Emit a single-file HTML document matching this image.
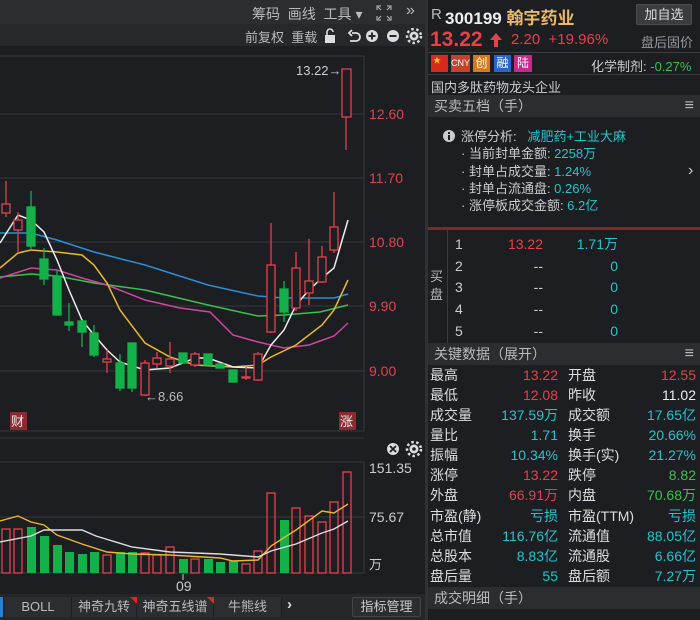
<!DOCTYPE html>
<html><head><meta charset="utf-8"><style>
*{margin:0;padding:0;box-sizing:border-box}
body{width:700px;height:620px;background:#1d1e22;font-family:"Liberation Sans","Noto Sans CJK SC",sans-serif;overflow:hidden;position:relative;color:#ddd}
.a{position:absolute;white-space:nowrap}
.r{color:#e8404a}.c{color:#27c3cc}.g{color:#3ac150}.w{color:#eee}.gr{color:#999}
.hd{position:absolute;left:428px;width:272px;height:22px;background:#2b2d31;font-size:14px;color:#bbb;padding-left:6px;line-height:22px}
.hd b{position:absolute;right:6px;top:0;font-weight:normal;font-size:16px}
.row{position:absolute;left:430px;width:268px;height:20px;font-size:14px;line-height:20px}
.row span{position:absolute}
.l1{left:0}.v1{right:140px;text-align:right}.l2{left:138px}.v2{right:2px;text-align:right}
.tab{position:absolute;top:597px;height:20px;font-size:13px;color:#bbb;text-align:center;line-height:20px;background:#2b2d31;border-right:1px solid #1d1e22}
</style></head><body>
<div class="a" style="left:0;top:0;width:426px;height:24px;background:#2b2d31"></div>
<div class="a" style="left:0;top:24px;width:426px;height:22px;background:#26282c"></div>
<div class="a" style="left:252px;top:4px;font-size:14px;color:#bbb">筹码&nbsp; 画线&nbsp; 工具 ▾</div>
<svg class="a" style="left:376px;top:5px" width="16" height="16"><path d="M1 5V1h4M11 1h4v4M15 11v4h-4M5 15H1v-4M2 2l3 3M14 2l-3 3M14 14l-3-3M2 14l3-3" stroke="#aaa" stroke-width="1.2" fill="none"/></svg>
<div class="a" style="left:406px;top:2px;font-size:16px;color:#bbb">»</div>
<div class="a" style="left:245px;top:27px;font-size:13px;color:#bbb">前复权&nbsp; 重载</div>
<svg class="a" style="left:322px;top:27px" width="104" height="18">
<rect x="3" y="8" width="10" height="8" fill="#ddd"/><path d="M5 8V5a3 3 0 0 1 6 0" stroke="#ddd" stroke-width="1.6" fill="none"/>
<path d="M30 6h4a4 4 0 0 1 0 8h-6M30 3l-3 3 3 3" stroke="#ddd" stroke-width="1.8" fill="none"/>
<circle cx="50" cy="9" r="6" fill="#ddd"/><path d="M46.5 9h7M50 5.5v7" stroke="#26282c" stroke-width="2"/>
<circle cx="71" cy="9" r="6" fill="#ddd"/><path d="M67.5 9h7" stroke="#26282c" stroke-width="2"/>
<circle cx="92" cy="9" r="4.5" fill="#ddd"/><circle cx="92" cy="9" r="7" fill="none" stroke="#ddd" stroke-width="2.5" stroke-dasharray="2.5 2.5"/><circle cx="92" cy="9" r="1.8" fill="#26282c"/>
</svg>
<svg class="a" style="left:0;top:46px" width="426" height="574" font-family="Liberation Sans" font-size="14">
<g transform="translate(0,-46)">
<rect x="-2" y="56" width="366" height="375" fill="none" stroke="#36383c"/>
<g stroke="#36383c"><line x1="0" y1="114" x2="364" y2="114"/><line x1="0" y1="178" x2="364" y2="178"/><line x1="0" y1="242" x2="364" y2="242"/><line x1="0" y1="306" x2="364" y2="306"/><line x1="0" y1="371" x2="364" y2="371"/></g>
<g fill="#e8404a"><text x="369" y="119">12.60</text><text x="369" y="183">11.70</text><text x="369" y="247">10.80</text><text x="369" y="311">9.90</text><text x="369" y="376">9.00</text></g>
<text x="296" y="75" fill="#ccc" font-size="13">13.22→</text>
<text x="145" y="401" fill="#bbb" font-size="13">←8.66</text>
<rect x="10" y="412" width="17" height="18" fill="#8c2a30"/><text x="11" y="426" fill="#eee" font-size="13" font-family="Noto Sans CJK SC">财</text>
<rect x="339" y="412" width="17" height="18" fill="#8c2a30"/><text x="340" y="426" fill="#eee" font-size="13" font-family="Noto Sans CJK SC">涨</text>
<g fill="none" stroke-width="1.5">
<polyline stroke="#2a8fd6" points="0,233 31,233 57,240 94,252 145,265 208,285 258,296 284,298 334,298 348,294"/>
<polyline stroke="#3ac150" points="0,277 31,274 57,276 94,283 145,290 208,305 258,316 284,315 320,312 348,305"/>
<polyline stroke="#d2449c" points="0,278 31,268 57,270 82,278 107,285 145,300 180,308 210,312 233,335 258,342 284,348 309,345 334,336 348,323"/>
<polyline stroke="#e8b830" points="0,268 18,253 31,250 57,252 82,255 94,265 107,283 120,310 145,343 170,357 195,365 233,367 258,365 271,357 296,345 322,325 334,310 348,280"/>
<polyline stroke="#eee" points="0,243 18,215 31,220 44,232 57,260 69,290 82,320 94,335 107,350 120,362 145,370 170,368 195,358 208,358 233,367 258,368 271,345 284,330 296,305 309,290 322,278 334,268 348,220"/>
</g>
<g stroke="#e8404a" fill="#1d1e22" stroke-width="1.3">
<line x1="6" y1="181" x2="6" y2="217"/><rect x="2" y="204" width="8" height="9"/>
<line x1="18" y1="212" x2="18" y2="253"/><rect x="14" y="220" width="8" height="10"/>
<line x1="107" y1="350" x2="107" y2="373"/><rect x="103" y="359" width="8" height="3"/>
<line x1="145" y1="360" x2="145" y2="396"/><rect x="141" y="363" width="8" height="32"/>
<line x1="157" y1="352" x2="157" y2="368"/><rect x="153" y="358" width="8" height="6"/>
<line x1="170" y1="342" x2="170" y2="373"/><rect x="166" y="359" width="8" height="7"/>
<line x1="195" y1="352" x2="195" y2="367"/><rect x="191" y="354" width="8" height="11"/>
<line x1="246" y1="367" x2="246" y2="380"/><rect x="242" y="377" width="8" height="1"/>
<line x1="258" y1="352" x2="258" y2="381"/><rect x="254" y="354" width="8" height="26"/>
<line x1="271" y1="223" x2="271" y2="333"/><rect x="267" y="265" width="8" height="67"/>
<line x1="296" y1="252" x2="296" y2="311"/><rect x="292" y="268" width="8" height="40"/>
<line x1="309" y1="239" x2="309" y2="305"/><rect x="305" y="281" width="8" height="12"/>
<line x1="322" y1="246" x2="322" y2="283"/><rect x="318" y="257" width="8" height="25"/>
<line x1="334" y1="192" x2="334" y2="253"/><rect x="330" y="227" width="8" height="23"/>
<line x1="346" y1="69" x2="346" y2="150"/><rect x="342" y="69" width="9" height="48"/>
</g>
<g stroke="#14b04a" fill="#14b04a" stroke-width="1.3">
<line x1="31" y1="191" x2="31" y2="250"/><rect x="27" y="207" width="8" height="39"/>
<line x1="44" y1="248" x2="44" y2="285"/><rect x="40" y="259" width="8" height="20"/>
<line x1="57" y1="270" x2="57" y2="315"/><rect x="53" y="276" width="8" height="39"/>
<line x1="69" y1="303" x2="69" y2="331"/><rect x="65" y="322" width="8" height="3"/>
<line x1="82" y1="320" x2="82" y2="347"/><rect x="78" y="321" width="8" height="11"/>
<line x1="94" y1="325" x2="94" y2="357"/><rect x="90" y="333" width="8" height="22"/>
<line x1="120" y1="354" x2="120" y2="391"/><rect x="116" y="363" width="8" height="25"/>
<line x1="132" y1="343" x2="132" y2="392"/><rect x="128" y="343" width="8" height="45"/>
<rect x="179" y="353" width="8" height="10"/><rect x="204" y="354" width="8" height="11"/>
<rect x="216" y="364" width="8" height="4"/><rect x="229" y="370" width="8" height="12"/>
<line x1="284" y1="281" x2="284" y2="322"/><rect x="280" y="289" width="8" height="23"/>
</g>
<line x1="0" y1="438" x2="364" y2="438" stroke="#333"/>
<circle cx="393" cy="449" r="6" fill="#ddd"/><path d="M390 446l6 6M396 446l-6 6" stroke="#1d1e22" stroke-width="1.8"/>
<circle cx="414" cy="449" r="4.5" fill="#ddd"/><circle cx="414" cy="449" r="7" fill="none" stroke="#ddd" stroke-width="2.5" stroke-dasharray="2.5 2.5"/><circle cx="414" cy="449" r="1.8" fill="#1d1e22"/>
<rect x="-2" y="462" width="366" height="111" fill="none" stroke="#36383c"/>
<line x1="0" y1="517" x2="364" y2="517" stroke="#36383c"/>
<g fill="#ccc"><text x="369" y="473">151.35</text><text x="369" y="522">75.67</text><text x="369" y="569" font-family="Noto Sans CJK SC" font-size="13">万</text><text x="176" y="591">09</text></g>
<line x1="183" y1="574" x2="183" y2="580" stroke="#ccc"/>
<g stroke="#e8404a" fill="none" stroke-width="1.3">
<rect x="2" y="529" width="8" height="44"/><rect x="14" y="529" width="8" height="44"/><rect x="103" y="555" width="8" height="18"/>
<rect x="141" y="553" width="8" height="20"/><rect x="153" y="555" width="8" height="18"/><rect x="166" y="547" width="8" height="26"/>
<rect x="191" y="559" width="8" height="14"/><rect x="242" y="564" width="8" height="9"/><rect x="254" y="551" width="8" height="22"/>
<rect x="267" y="493" width="8" height="80"/><rect x="292" y="508" width="8" height="65"/><rect x="305" y="516" width="8" height="57"/>
<rect x="318" y="522" width="8" height="51"/><rect x="330" y="502" width="8" height="71"/><rect x="343" y="472" width="8" height="101"/>
</g>
<g fill="#14b04a">
<rect x="27" y="527" width="9" height="46"/><rect x="40" y="536" width="9" height="37"/><rect x="53" y="545" width="9" height="28"/>
<rect x="65" y="552" width="9" height="21"/><rect x="78" y="554" width="9" height="19"/><rect x="90" y="552" width="9" height="21"/>
<rect x="116" y="552" width="9" height="21"/><rect x="128" y="552" width="9" height="21"/><rect x="179" y="559" width="9" height="14"/>
<rect x="204" y="559" width="9" height="14"/><rect x="216" y="562" width="9" height="11"/><rect x="229" y="561" width="9" height="12"/>
<rect x="280" y="520" width="9" height="53"/>
</g>
<g fill="none" stroke-width="1.4">
<polyline stroke="#e8b830" points="0,521 18,516 31,522 44,525 57,535 82,544 107,552 132,554 170,555 220,558 233,561 258,560 271,546 296,530 322,511 334,513 348,504"/>
<polyline stroke="#ddd" points="0,542 31,536 44,530 82,530 96,536 132,547 170,552 220,554 258,557 271,551 296,544 322,533 334,529 348,521"/>
</g>
</g></svg>
<div class="a" style="left:0;top:594px;width:426px;height:26px;background:#25272b"></div>
<div class="tab" style="left:0;width:4px;background:#2a7fd0"></div>
<div class="tab" style="left:5px;width:67px">BOLL</div>
<div class="tab" style="left:72px;width:65px">神奇九转</div>
<div class="tab" style="left:137px;width:77px">神奇五线谱</div>
<div class="tab" style="left:214px;width:68px">牛熊线</div>
<div class="a" style="left:130px;top:597px;width:0;height:0;border-left:7px solid transparent;border-top:7px solid #e82020"></div>
<div class="a" style="left:207px;top:597px;width:0;height:0;border-left:7px solid transparent;border-top:7px solid #e82020"></div>
<div class="a" style="left:287px;top:596px;font-size:15px;color:#ddd;font-weight:bold">›</div>
<div class="a" style="left:352px;top:597px;width:69px;height:20px;border:1px solid #444;background:#2b2d31;border-radius:2px;font-size:13px;color:#ccc;text-align:center;line-height:18px">指标管理</div>
<div class="a" style="left:425px;top:0;width:3px;height:620px;background:#2f3135"></div>
<div class="a" style="left:431px;top:6px;font-size:15px;color:#bbb">R</div>
<div class="a" style="left:445px;top:4px;font-size:17px;color:#eee;font-weight:bold">300199 <span style="color:#e8b96a">翰宇药业</span></div>
<div class="a" style="left:636px;top:4px;width:56px;height:21px;background:#3a3c40;border:1px solid #4a4c50;border-radius:2px;font-size:13px;color:#ddd;text-align:center;line-height:19px">加自选</div>
<div class="a r" style="left:430px;top:28px;font-size:21px;font-weight:bold">13.22</div>
<svg class="a" style="left:489px;top:32px" width="14" height="16"><path d="M7 1L1 8h4v7h4V8h4z" fill="#e8404a"/></svg>
<div class="a r" style="left:511px;top:31px;font-size:15px">2.20&nbsp; +19.96%</div>
<div class="a gr" style="left:641px;top:32px;font-size:13px">盘后固价</div>
<div class="a" style="left:428px;top:52px;width:272px;height:1px;background:#3a3c40"></div>
<div class="a" style="left:431px;top:55px;width:17px;height:17px;background:#d8291f;color:#ffd400;font-size:8px;padding-left:2px">★</div>
<div class="a" style="left:451px;top:55px;width:19px;height:17px;background:#c6402c;color:#fff;font-size:9px;line-height:17px;text-align:center">CNY</div>
<div class="a" style="left:473px;top:55px;width:17px;height:17px;background:#d7791a;color:#fff;font-size:12px;line-height:17px;text-align:center">创</div>
<div class="a" style="left:494px;top:55px;width:17px;height:17px;background:#2a66c8;color:#fff;font-size:12px;line-height:17px;text-align:center">融</div>
<div class="a" style="left:514px;top:55px;width:18px;height:17px;background:#c8288a;color:#fff;font-size:12px;line-height:17px;text-align:center">陆</div>
<div class="a" style="left:591px;top:56px;font-size:13px;color:#ccc">化学制剂: <span class="g">-0.27%</span></div>
<div class="a" style="left:428px;top:74px;width:272px;height:1px;background:#3a3c40"></div>
<div class="a" style="left:431px;top:77px;font-size:13px;color:#ccc">国内多肽药物龙头企业</div>
<div class="hd" style="top:95px">买卖五档（手）<b>≡</b></div>
<svg class="a" style="left:443px;top:130px" width="12" height="12"><circle cx="6" cy="6" r="6" fill="#ccc"/><rect x="5" y="5" width="2" height="5" fill="#1d1e22"/><rect x="5" y="2" width="2" height="2" fill="#1d1e22"/></svg>
<div class="a" style="left:461px;top:128px;font-size:13px;color:#ccc;line-height:17.3px">涨停分析:&nbsp;&nbsp; <span class="c">减肥药+工业大麻</span><br>· 当前封单金额: <span class="c">2258万</span><br>· 封单占成交量: <span class="c">1.24%</span><br>· 封单占流通盘: <span class="c">0.26%</span><br>· 涨停板成交金额: <span class="c">6.2亿</span></div>
<div class="a" style="left:688px;top:162px;font-size:16px;color:#ccc">›</div>
<div class="a" style="left:428px;top:227px;width:272px;height:3px;background:#7a2a2e"></div>
<div class="a" style="left:447px;top:230px;width:1px;height:113px;background:#3a3c40"></div>
<div class="a" style="left:430px;top:268px;font-size:13px;color:#bbb;line-height:18px">买<br>盘</div>
<div class="a" style="left:455px;top:234px;font-size:14px;color:#ccc;line-height:21.7px">1<br>2<br>3<br>4<br>5</div>
<div class="a" style="left:500px;top:234px;width:43px;text-align:right;font-size:14px;line-height:21.7px;color:#ccc"><span class="r">13.22</span><br>--<br>--<br>--<br>--</div>
<div class="a c" style="left:560px;top:234px;width:58px;text-align:right;font-size:14px;line-height:21.7px">1.71万<br>0<br>0<br>0<br>0</div>
<div class="hd" style="top:343px">关键数据（展开）<b>≡</b></div>
<div class="row" style="top:365px"><span class="l1">最高</span><span class="v1 r">13.22</span><span class="l2">开盘</span><span class="v2 r">12.55</span></div>
<div class="row" style="top:385px"><span class="l1">最低</span><span class="v1 r">12.08</span><span class="l2">昨收</span><span class="v2 w">11.02</span></div>
<div class="row" style="top:405px"><span class="l1">成交量</span><span class="v1 c">137.59万</span><span class="l2">成交额</span><span class="v2 c">17.65亿</span></div>
<div class="row" style="top:425px"><span class="l1">量比</span><span class="v1 c">1.71</span><span class="l2">换手</span><span class="v2 c">20.66%</span></div>
<div class="row" style="top:445px"><span class="l1">振幅</span><span class="v1 c">10.34%</span><span class="l2">换手(实)</span><span class="v2 c">21.27%</span></div>
<div class="row" style="top:465px"><span class="l1">涨停</span><span class="v1 r">13.22</span><span class="l2">跌停</span><span class="v2 g">8.82</span></div>
<div class="row" style="top:485px"><span class="l1">外盘</span><span class="v1 r">66.91万</span><span class="l2">内盘</span><span class="v2 g">70.68万</span></div>
<div class="row" style="top:506px"><span class="l1">市盈(静)</span><span class="v1 c">亏损</span><span class="l2">市盈(TTM)</span><span class="v2 c">亏损</span></div>
<div class="row" style="top:526px"><span class="l1">总市值</span><span class="v1 c">116.76亿</span><span class="l2">流通值</span><span class="v2 c">88.05亿</span></div>
<div class="row" style="top:546px"><span class="l1">总股本</span><span class="v1 c">8.83亿</span><span class="l2">流通股</span><span class="v2 c">6.66亿</span></div>
<div class="row" style="top:566px"><span class="l1">盘后量</span><span class="v1 c">55</span><span class="l2">盘后额</span><span class="v2 c">7.27万</span></div>
<div class="hd" style="top:587px">成交明细（手）</div>
</body></html>
